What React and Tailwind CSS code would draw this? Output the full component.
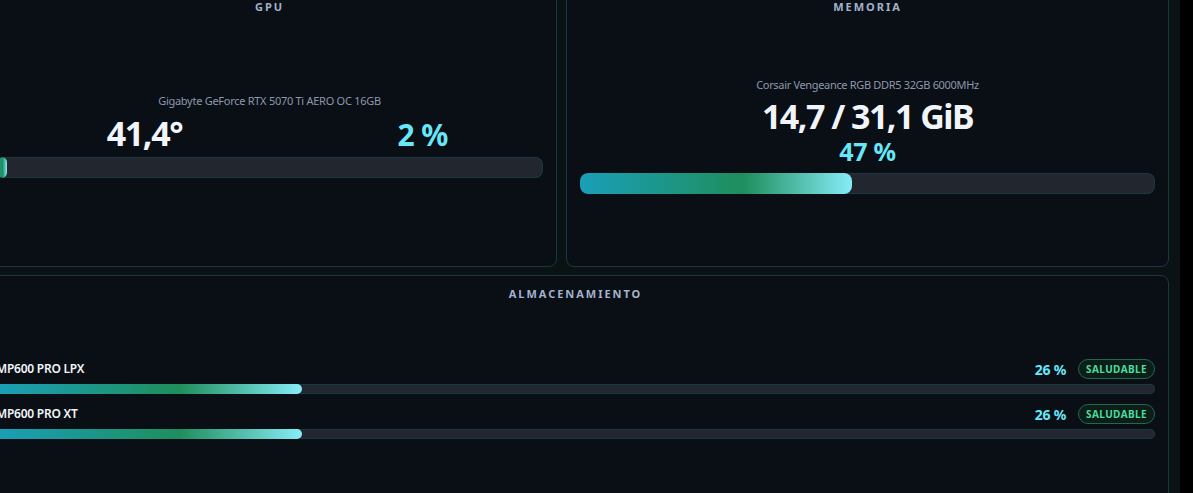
import React from "react";

const font = { fontFamily: '"Noto Sans", "Open Sans", sans-serif' };

const fill = "bg-[linear-gradient(90deg,#1a9fb8_0%,#1f8e5c_60%,#86ecf8_100%)]";

const Bar = ({ value, size = "lg" }) => {
  const track =
    size === "lg"
      ? "h-[21px] rounded-lg"
      : "h-[10px] rounded-full";
  const inner = size === "lg" ? "rounded-lg" : "rounded-full";
  return (
    <div className={`w-full overflow-hidden bg-[#22272f] shadow-[inset_0_0_0_1px_#1b3741] ${track}`}>
      <div className={`h-full ${inner} ${fill}`} style={{ width: `${value}%` }} />
    </div>
  );
};

const Card = ({ title, className = "", children }) => (
  <section
    className={`flex flex-col rounded-lg border border-[#163a44] bg-[#0a0e15] px-[13px] ${className}`}
  >
    <h2 className="text-center text-[11px] font-bold leading-4 tracking-[0.18em] text-[#a3b3cc]">
      {title}
    </h2>
    {children}
  </section>
);

const drives = [
  { name: "MP600 PRO LPX", pct: 26.4, label: "26 %" },
  { name: "MP600 PRO XT", pct: 26.4, label: "26 %" },
];

export default function App() {
  return (
    <div className="flex h-[493px] w-[1193px] overflow-hidden bg-[#0a1214]" style={font}>
      <div className="flex-1 overflow-hidden">
        <div className="-ml-[18px] -mt-[14px] grid w-[1187px] grid-cols-[575px_603px] gap-x-[9px] gap-y-[8px]">
          <Card title="GPU" className="h-[281px] pt-[12px] pb-[10px]">
            <div className="flex flex-1 flex-col justify-center">
              <p className="text-center text-[11px] leading-[14px] tracking-[-0.025em] text-[#8c99ad]">
                Gigabyte GeForce RTX 5070 Ti AERO OC 16GB
              </p>
              <div className="mt-2 grid grid-cols-[297px_1fr] items-baseline">
                <span className="text-center text-[34px] font-bold leading-none tracking-[-0.04em] text-[#f1f5f9]">
                  41,4°
                </span>
                <span className="pl-[9px] text-center text-[30px] font-bold leading-none tracking-[-0.02em] text-[#67e8f9]">
                  2 %
                </span>
              </div>
              <div className="mt-[7px]">
                <Bar value={2} />
              </div>
            </div>
          </Card>

          <Card title="MEMORIA" className="h-[281px] pt-[12px] pb-[10px]">
            <div className="flex flex-1 flex-col justify-center">
              <p className="text-center text-[11px] leading-[14px] tracking-[-0.03em] text-[#8c99ad]">
                Corsair Vengeance RGB DDR5 32GB 6000MHz
              </p>
              <p className="mt-[7px] text-center text-[34px] font-bold leading-none tracking-[-0.045em] text-[#f1f5f9]">
                14,7 / 31,1 GiB
              </p>
              <p className="mt-[6px] text-center text-[25px] font-bold leading-none tracking-[-0.01em] text-[#67e8f9]">
                47 %
              </p>
              <div className="mt-[9px]">
                <Bar value={47.3} />
              </div>
            </div>
          </Card>

          <Card title="ALMACENAMIENTO" className="col-span-2 h-[300px] pt-[10px]">
            <div className="mt-[57px] flex flex-col gap-[10px]">
              {drives.map((d) => (
                <div key={d.name}>
                  <div className="flex h-[20px] items-center justify-between">
                    <span className="text-[12px] font-semibold tracking-[-0.02em] text-[#f1f5f9]">
                      {d.name}
                    </span>
                    <div className="flex items-center gap-3">
                      <span className="text-[14px] font-bold tracking-[-0.02em] text-[#67e8f9]">
                        {d.label}
                      </span>
                      <span className="flex h-[20px] items-center rounded-full border border-[#1d6b4c] bg-[#0c1d1a] px-[7px] text-[10px] font-bold tracking-[0.04em] text-[#4ade9a]">
                        SALUDABLE
                      </span>
                    </div>
                  </div>
                  <div className="mt-[5px]">
                    <Bar value={d.pct} size="sm" />
                  </div>
                </div>
              ))}
            </div>
          </Card>
        </div>
      </div>
      <div className="w-[13px] bg-black" />
    </div>
  );
}
